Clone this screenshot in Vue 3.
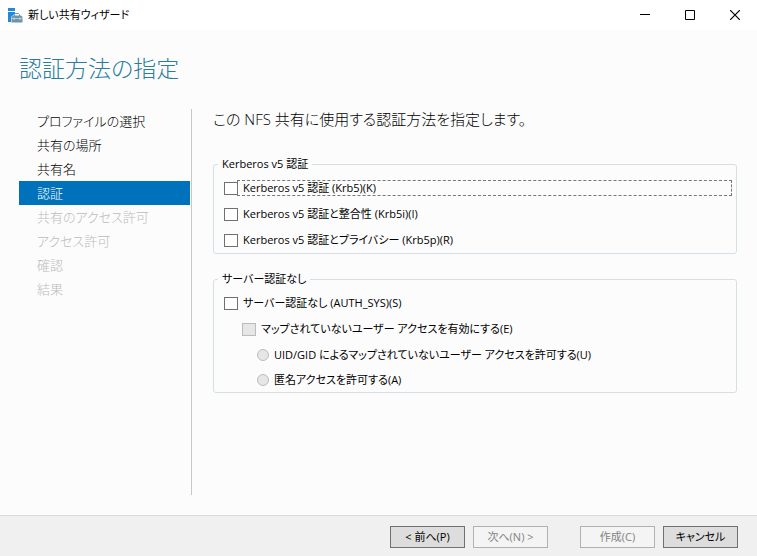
<script setup>
import { ref } from 'vue'

const steps = [
  { label: 'プロファイルの選択', state: 'done' },
  { label: '共有の場所', state: 'done' },
  { label: '共有名', state: 'done' },
  { label: '認証', state: 'current' },
  { label: '共有のアクセス許可', state: 'pending' },
  { label: 'アクセス許可', state: 'pending' },
  { label: '確認', state: 'pending' },
  { label: '結果', state: 'pending' },
]

const kerberos = ref([
  { id: 'krb5', label: 'Kerberos v5 認証 (Krb5)(K)', checked: false, focused: true },
  { id: 'krb5i', label: 'Kerberos v5 認証と整合性 (Krb5i)(I)', checked: false, focused: false },
  { id: 'krb5p', label: 'Kerberos v5 認証とプライバシー (Krb5p)(R)', checked: false, focused: false },
])

const authSys = ref(false)
const unmapped = ref(false)
const access = ref('')
</script>

<template>
  <div class="window">
    <header class="titlebar">
      <svg class="app-icon" width="15" height="15" viewBox="0 0 15 15" aria-hidden="true">
        <path fill="#2089dc" d="M0 0h7v3H0zM0 4h7v1.500L3 9v5H0z" />
        <path fill="none" stroke="#6f93a8" d="M6.500 8V6.500l1-1h3l1 1V8" />
        <path fill="#6f93a8" d="M5 7.500h8l1.500 1.500v5.500h-11V9z" />
        <path fill="#c9d8e0" d="M3.500 10.300h2v-.8h1v.8h5v-.8h1v.8h2v.8h-2v.9h-1v-.9h-5v.9h-1v-.9h-2z" />
      </svg>
      <span class="title">新しい共有ウィザード</span>
      <div class="caption">
        <button type="button" aria-label="最小化">
          <svg width="10" height="10" viewBox="0 0 10 10"><path d="M0 4.500h10" stroke="#000" fill="none" /></svg>
        </button>
        <button type="button" aria-label="最大化">
          <svg width="10" height="10" viewBox="0 0 10 10"><path d="M.5.5h9v9h-9z" stroke="#000" fill="none" /></svg>
        </button>
        <button type="button" aria-label="閉じる">
          <svg width="10" height="10" viewBox="0 0 10 10"><path d="M0 0l10 10M10 0L0 10" stroke="#000" stroke-width="1.200" fill="none" /></svg>
        </button>
      </div>
    </header>

    <main class="page">
      <h1>認証方法の指定</h1>
      <div class="columns">
        <nav>
          <ol class="steps">
            <li v-for="s in steps" :key="s.label" :class="s.state">{{ s.label }}</li>
          </ol>
        </nav>
        <section class="content">
          <h2>この NFS 共有に使用する認証方法を指定します。</h2>

          <fieldset>
            <legend>Kerberos v5 認証</legend>
            <div v-for="k in kerberos" :key="k.id" class="option">
              <input :id="k.id" v-model="k.checked" type="checkbox" />
              <label :for="k.id" :class="{ focused: k.focused }">{{ k.label }}</label>
            </div>
          </fieldset>

          <fieldset>
            <legend>サーバー認証なし</legend>
            <div class="option">
              <input id="sys" v-model="authSys" type="checkbox" />
              <label for="sys">サーバー認証なし (AUTH_SYS)(S)</label>
            </div>
            <div class="option nested">
              <input id="unmapped" v-model="unmapped" type="checkbox" disabled />
              <label for="unmapped">マップされていないユーザー アクセスを有効にする(E)</label>
            </div>
            <div class="option deep">
              <input id="uid" v-model="access" type="radio" name="access" value="uid" disabled />
              <label for="uid">UID/GID によるマップされていないユーザー アクセスを許可する(U)</label>
            </div>
            <div class="option deep">
              <input id="anon" v-model="access" type="radio" name="access" value="anon" disabled />
              <label for="anon">匿名アクセスを許可する(A)</label>
            </div>
          </fieldset>
        </section>
      </div>
    </main>

    <footer class="actions">
      <div class="pair">
        <button type="button">&lt; 前へ(P)</button>
        <button type="button" disabled>次へ(N) &gt;</button>
      </div>
      <div class="pair">
        <button type="button" disabled>作成(C)</button>
        <button type="button">キャンセル</button>
      </div>
    </footer>
  </div>
</template>

<style>
body {
  margin: 0;
  background: #fcfcfc;
}
</style>

<style scoped>
.window {
  box-sizing: border-box;
  min-height: 100vh;
  display: flex;
  flex-direction: column;
  background: #fcfcfc;
  color: #000;
  font-family: "Open Sans", "Noto Sans CJK JP", sans-serif;
  font-size: 11px;
  line-height: 16px;
  font-feature-settings: "palt";
}

.titlebar {
  display: flex;
  align-items: center;
  height: 30px;
  padding-left: 8px;
  background: #fff;
}

.title {
  flex: 1;
  margin-left: 5px;
}

.caption {
  display: flex;
}

.caption button {
  display: flex;
  align-items: center;
  justify-content: center;
  width: 45px;
  height: 28px;
  padding: 0;
  border: 0;
  background: none;
}

.page {
  flex: 1;
  display: flex;
  flex-direction: column;
  padding: 22px 20px 20px 19px;
}

h1 {
  margin: 0 0 25px;
  color: #2b7e9b;
  font-size: 23px;
  font-weight: 300;
  line-height: 32px;
}

.columns {
  flex: 1;
  display: flex;
}

nav {
  flex: none;
  width: 171px;
  padding-right: 1px;
  border-right: 1px solid #c8c8c8;
}

.steps {
  margin: 0;
  padding: 0;
  list-style: none;
  font-size: 13px;
  font-weight: 300;
  line-height: 24px;
}

.steps li {
  padding-left: 18px;
}

.steps .current {
  background: #0072bc;
  color: #fff;
}

.steps .pending {
  color: #bbb;
}

.content {
  flex: 1;
  min-width: 0;
  padding-left: 21px;
}

h2 {
  margin: 0 0 27px;
  font-size: 15px;
  font-weight: 300;
  line-height: 20px;
}

fieldset {
  min-width: 0;
  margin: 0 0 17px;
  padding: 3px 4px 0 10px;
  border: 1px solid #d5dfe5;
  border-radius: 3px;
}

legend {
  margin-left: -6px;
  padding: 0 4px;
}

.option {
  display: flex;
  align-items: center;
  height: 26px;
}

.option.nested {
  padding-left: 18px;
}

.option.deep {
  height: 25px;
  padding-left: 33px;
}

.option input {
  appearance: none;
  box-sizing: border-box;
  flex: none;
  width: 14px;
  height: 13px;
  margin: 0;
  border: 1px solid #707070;
  background: #fff;
}

.option input:checked {
  background: #333;
}

.option input[type="radio"] {
  width: 12px;
  height: 12px;
  border-radius: 50%;
}

.option input:disabled {
  border-color: #bcbcbc;
  background: #e6e6e6;
}

.option label {
  flex: 1;
  padding-left: 5px;
  white-space: nowrap;
}

.option label.focused {
  margin-left: -1px;
  border: 1px dashed #777;
  line-height: 14px;
}

.actions {
  display: flex;
  justify-content: flex-end;
  gap: 32px;
  padding: 10px 19px 8px;
  border-top: 1px solid #d9d9d9;
  background: #f0f0f0;
}

.pair {
  display: flex;
  gap: 8px;
}

.actions button {
  box-sizing: border-box;
  width: 75px;
  height: 22px;
  padding: 0;
  border: 1px solid #707070;
  background: #ddd;
  color: #000;
  font: inherit;
  font-feature-settings: inherit;
}

.actions button:disabled {
  border-color: #adb2b5;
  background: #f4f4f4;
  color: #838383;
}
</style>
